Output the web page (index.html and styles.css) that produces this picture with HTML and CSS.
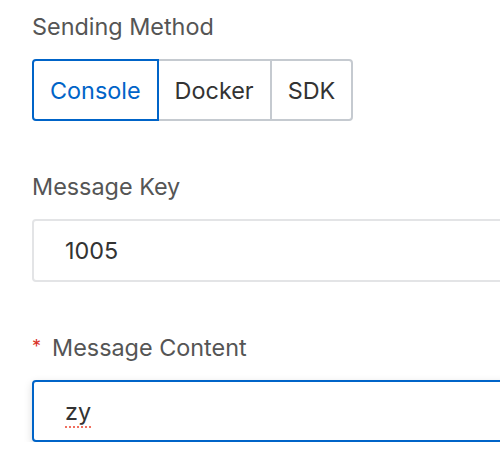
FILE: index.html
```html
<!DOCTYPE html>
<html lang="en">
<head>
<meta charset="utf-8">
<title>Send Message</title>
<link rel="stylesheet" href="styles.css">
</head>
<body>
  <form class="form">
    <div class="field">
      <div class="label">Sending Method</div>
      <div class="seg">
        <span class="seg-btn active">Console</span>
        <span class="seg-btn">Docker</span>
        <span class="seg-btn">SDK</span>
      </div>
    </div>
    <div class="field">
      <div class="label">Message Key</div>
      <div class="input">1005</div>
    </div>
    <div class="field">
      <div class="label"><span class="req">*</span>Message Content</div>
      <div class="input focus"><span class="spell">zy</span></div>
    </div>
  </form>
</body>
</html>
```
FILE: styles.css
```css
html, body {
  margin: 0;
  background: #fff;
  overflow: hidden;
}
body {
  padding: 11px 0 0 32px;
  font-family: Inter, "Noto Sans", sans-serif;
  font-size: 23.4px;
}
.form {
  width: 540px;
}
.field {
  margin-bottom: 50px;
}
.field:last-child {
  margin-bottom: 0;
}
.label {
  height: 32px;
  line-height: 32px;
  color: #555;
  margin-bottom: 16px;
}
.req {
  color: #d93026;
  font-size: 18px;
  margin-right: 11px;
  vertical-align: top;
  line-height: 30px;
}
.seg {
  display: inline-flex;
}
.seg-btn {
  box-sizing: border-box;
  height: 62px;
  display: flex;
  align-items: center;
  padding: 0 16px;
  border: 2px solid #c5cad0;
  margin-left: -2px;
  color: #333;
  background: #fff;
  position: relative;
}
.seg-btn:first-child {
  margin-left: 0;
  border-radius: 4px 0 0 4px;
}
.seg-btn:last-child {
  border-radius: 0 4px 4px 0;
}
.seg-btn.active {
  border-color: #0064c8;
  color: #0064c8;
  z-index: 1;
}
.input {
  box-sizing: border-box;
  height: 63px;
  display: flex;
  align-items: center;
  padding-left: 31px;
  border: 2px solid #e3e4e6;
  border-radius: 4px;
  color: #333;
  background: #fff;
}
.input.focus {
  height: 62px;
  border-color: #0064c8;
  box-shadow: 0 3px 8px rgba(0, 0, 0, 0.15);
}
.spell {
  text-decoration: underline dotted #f07060;
  text-decoration-thickness: 2px;
  text-underline-offset: 7px;
}
```
